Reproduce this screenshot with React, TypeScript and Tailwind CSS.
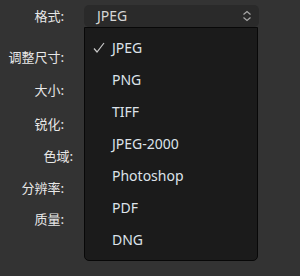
import React from "react";

const cjk = { fontFamily: '"Noto Sans CJK SC", "Noto Sans", sans-serif' };
const latin = { fontFamily: '"Noto Sans", "Noto Sans CJK SC", sans-serif' };

const items = ["JPEG", "PNG", "TIFF", "JPEG-2000", "Photoshop", "PDF", "DNG"];

export default function App() {
  return (
    <div className="relative w-[300px] h-[276px] bg-[#333333] overflow-hidden pt-[5px]" style={cjk}>
      <div className="flex items-center h-[22px]">
        <div className="w-[64px] text-right text-[13px] leading-[20px] text-[#e8e8e8]">格式:</div>
        <div className="ml-[20px] w-[175px] h-[22px] rounded-[5px] bg-[#2a2a2a] flex items-center justify-between pl-[13px] pr-[7px]">
          <span className="text-[14px] leading-[20px] text-[#d6d6d6]" style={latin}>JPEG</span>
          <svg width="10" height="12" viewBox="0 0 10 12" className="text-[#a8a8a8]">
            <path d="M1.5 4.5 L5 1.5 L8.5 4.5" fill="none" stroke="currentColor" strokeWidth="1.2" />
            <path d="M1.5 7.5 L5 10.5 L8.5 7.5" fill="none" stroke="currentColor" strokeWidth="1.2" />
          </svg>
        </div>
      </div>
      <div className="flex flex-col text-[13px] leading-[20px] text-[#e8e8e8]">
        <div className="w-[64px] text-right mt-[20px]">调整尺寸:</div>
        <div className="w-[64px] text-right mt-[13px]">大小:</div>
        <div className="w-[64px] text-right mt-[14px]">锐化:</div>
        <div className="w-[73px] text-right mt-[12px]">色域:</div>
        <div className="w-[64px] text-right mt-[12px]">分辨率:</div>
        <div className="w-[64px] text-right mt-[11px]">质量:</div>
      </div>
      <div className="absolute left-[84px] top-[27px] w-[174px] h-[234px] bg-[#1b1b1b] border border-[#080808] rounded-b-[5px] pt-[3px]">
        {items.map((it, i) => (
          <div key={it} className="relative h-[32px] flex items-center pl-[27px] text-[14px] text-[#dde3ea]" style={latin}>
            {i === 0 && (
              <svg width="12" height="12" viewBox="0 0 12 12" className="absolute left-[8px] top-[11px] text-[#c8c8c8]">
                <path d="M1 6.5 L4 10 L11 1" fill="none" stroke="currentColor" strokeWidth="1.2" />
              </svg>
            )}
            {it}
          </div>
        ))}
      </div>
    </div>
  );
}
